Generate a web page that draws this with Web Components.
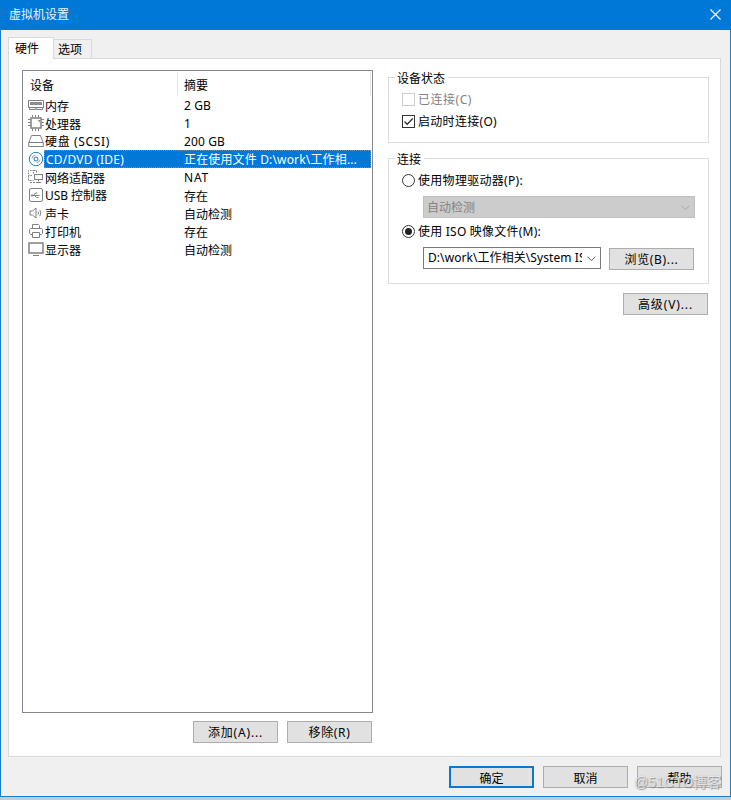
<!DOCTYPE html>
<html lang="zh-CN">
<head>
<meta charset="utf-8">
<title>虚拟机设置</title>
<style>
html,body{margin:0;width:731px;height:800px;overflow:hidden;background:#c4cbd2}
body{font:12px/18px "Noto Sans","Noto Sans CJK SC",sans-serif;color:#000}
</style>
</head>
<body>
<vm-settings></vm-settings>
<script>
const define = (name, html, extra = {}) => {
  const t = document.createElement('template');
  t.innerHTML = html;
  customElements.define(name, class extends HTMLElement {
    constructor() {
      super();
      this.attachShadow({mode: 'open'}).appendChild(t.content.cloneNode(true));
    }
    connectedCallback() { if (extra.connect) extra.connect(this, this.shadowRoot); }
  });
};

// Text run whose tracking is set so that it spans the width in "w".
define('ui-text', `<style>:host{display:inline-block;white-space:pre;line-height:18px;height:18px}:host([cjk]){line-height:20px}</style><span><slot></slot></span>`, {
  connect(host, root) {
    const w = +host.getAttribute('w');
    if (!w) return;
    const s = root.querySelector('span');
    const n = host.textContent.length;
    s.style.letterSpacing = ((w - s.getBoundingClientRect().width) / n) + 'px';
  }
});

define('ui-button', `<style>
:host{box-sizing:border-box;display:flex;align-items:center;justify-content:center;width:85px;height:22px;border:1px solid #adadad;background:#e1e1e1;padding-top:2px;flex:none}
:host([primary]){border:2px solid #1076ca}
</style><slot></slot>`);

define('ui-group', `<style>
:host{box-sizing:border-box;display:block;border:1px solid #dcdcdc;width:321px;padding:0 0 0 13px}
.cap{display:block;width:max-content;background:#fff;padding:0 3px 0 2px;margin:-9px 0 0 -7px;height:18px;line-height:20px}
</style><span class="cap"><slot name="caption"></slot></span><slot></slot>`);

define('ui-check', `<style>
:host{display:flex;align-items:center;gap:3px;height:22px}
:host([disabled]){color:#838383}
svg{display:block;flex:none;margin-bottom:2px}
.b{stroke:#333;fill:#fff}.m{stroke:#333;fill:none;stroke-width:1.3;display:none}
:host([disabled]) .b{stroke:#ccc}
:host([checked]) .m{display:inline}
ui-text{display:block}
</style><svg width="13" height="13"><rect class="b" x=".5" y=".5" width="12" height="12"/><path class="m" d="M2.5 6.5L5.2 9.3L10.8 3.5"/></svg><slot></slot>`);

define('ui-radio', `<style>
:host{display:flex;align-items:center;gap:3px;height:22px}
svg{display:block;flex:none;margin-bottom:2px}.m{display:none}
:host([checked]) .m{display:inline}
</style><svg width="13" height="13"><circle cx="6.5" cy="6.5" r="6" fill="#fff" stroke="#333"/><circle class="m" cx="6.5" cy="6.5" r="3.5" fill="#222"/></svg><slot></slot>`);

define('ui-combo', `<style>
:host{box-sizing:border-box;display:flex;align-items:center;height:22px;border:1px solid #7a7a7a;background:#fff;padding-left:4px}
:host([disabled]){background:#ccc;border-color:#bfbfbf;color:#838383;padding-left:3px}
.v{flex:1;overflow:hidden;height:18px;white-space:nowrap}
:host([disabled]) .v{line-height:20px}
svg{flex:none;margin:1px 4px 0 5px}path{fill:none;stroke:#555}
:host([disabled]) path{stroke:#a5a5a5}
</style><span class="v"><slot></slot></span><svg width="9" height="6"><path d="M.5 .7L4.5 4.7L8.5 .7"/></svg>`);

const icons = {
  memory: '<path d="M.5 3.5h15v7h-1v2h-6v-1h-1v1h-6v-2h-1zM.5 10.5h15"/><path d="M2.5 5.5h3v2h-3zM6.5 5.5h3v2h-3zM10.5 5.5h3v2h-3z" fill="#999"/>',
  cpu: '<rect x="3" y="3" width="10" height="10" stroke-width="1.5"/><path d="M4.5 0v2.5M7.5 0v2.5M10.5 0v2.5M4.5 13.5V16M7.5 13.5V16M10.5 13.5V16M0 4.5h2.5M0 7.5h2.5M0 10.5h2.5M13.5 4.5H16M13.5 7.5H16M13.5 10.5H16"/><path d="M10 5.5h1.5V7"/>',
  disk: '<path d="M3.5 2.5h9L15.3 10v3.5H.7V10zM.7 9.5h14.6"/>',
  cd: '<g stroke="#1f7fb5"><circle cx="8" cy="8" r="6.7"/><circle cx="8" cy="8" r="2"/><path d="M4 7.5A4 4 0 0 1 7 4.2M9 11.8A4 4 0 0 0 12 8.8" stroke="#69a9d0"/></g>',
  net: '<path d="M5.5 4.5V1.5h-5v5h4" stroke-dasharray="1.5 1"/><path d="M5.5 1.5h3v3M.5 6.5v5h5M2 13.5h6" stroke-dasharray="2 1"/><rect x="6.5" y="5.5" width="8" height="5"/><path d="M10.5 10.5v2M8 13.5h5"/>',
  usb: '<rect x="1.5" y="1.5" width="13" height="13" rx="1.5"/><path d="M3.5 8.5h8M5.5 8.5L7.5 6h2M6.5 8.5l2 2h2"/><circle cx="4" cy="8.5" r=".7" fill="#777"/>',
  sound: '<path d="M2 6h2.5L8 3v10L4.5 10H2zM10 6.5q1 1.5 0 3M11.8 4.8q2 3.2 0 6.4"/>',
  printer: '<path d="M4.5 5.5v-4h6l1 1v3M4.5 11.5h-2l-1-1v-4l1-1h11l1 1v4l-1 1h-2M4.5 9.5h7v5h-7z"/>',
  display: '<rect x="1" y="2" width="14" height="10" stroke-width="1.5"/><path d="M5 14.5h6"/>'
};
define('device-row', `<style>
:host{display:grid;grid-template-columns:21px 134px 1fr;height:18px;padding-right:1px}
svg{display:block;margin:1px 0 0 5px;fill:none;stroke:#808080}
.n{padding-left:1px;height:18px;margin-top:1px}.s{padding-left:6px;height:18px;margin-top:1px;overflow:hidden}
.n,.s{line-height:18px;box-sizing:border-box}
:host([selected]) .n,:host([selected]) .s{background:#0078d7;color:#fff;margin:0;border:1px dotted #5f93b8}
:host([selected]) .n{border-right:0;padding:0 0 0 1px}
:host([selected]) .s{border-left:0}
</style><svg width="16" height="16" viewBox="0 0 16 16"></svg><div class="n"><slot name="name"></slot></div><div class="s"><slot></slot></div>`, {
  connect(host, root) { root.querySelector('svg').innerHTML = icons[host.getAttribute('icon')]; }
});

define('device-list', `<style>
:host{box-sizing:border-box;display:block;width:351px;height:643px;border:1px solid #828790;background:#fff}
.h{display:grid;grid-template-columns:154px 1fr;height:24px;margin:1px 1px 0 0}
.h div{border-right:1px solid #e5e5e5;padding:5px 0 0 7px;box-sizing:border-box}
.h div+div{padding-left:7px}
.h div:first-child{width:155px}
</style><div class="h"><div>设备</div><div>摘要</div></div>
<device-row icon="memory"><ui-text slot="name" cjk>内存</ui-text><ui-text w="27">2 GB</ui-text></device-row>
<device-row icon="cpu"><ui-text slot="name" cjk>处理器</ui-text><ui-text>1</ui-text></device-row>
<device-row icon="disk"><ui-text slot="name" w="65">硬盘 (SCSI)</ui-text><ui-text w="41">200 GB</ui-text></device-row>
<device-row icon="cd" selected><ui-text slot="name" w="78">CD/DVD (IDE)</ui-text><ui-text w="173">正在使用文件 D:\\work\\工作相...</ui-text></device-row>
<device-row icon="net"><ui-text slot="name" cjk>网络适配器</ui-text><ui-text w="25">NAT</ui-text></device-row>
<device-row icon="usb"><ui-text slot="name" w="62">USB 控制器</ui-text><ui-text cjk>存在</ui-text></device-row>
<device-row icon="sound"><ui-text slot="name" cjk>声卡</ui-text><ui-text cjk>自动检测</ui-text></device-row>
<device-row icon="printer"><ui-text slot="name" cjk>打印机</ui-text><ui-text cjk>存在</ui-text></device-row>
<device-row icon="display"><ui-text slot="name" cjk>显示器</ui-text><ui-text cjk>自动检测</ui-text></device-row>`);

define('title-bar', `<style>
:host{box-sizing:border-box;display:flex;justify-content:space-between;align-items:center;height:30px;background:#0078d7;color:#eaf4fc;padding:0 10px 0 9px}
svg{margin-top:-1px}
</style><slot></slot><svg width="11" height="11"><path d="M.5 .5l10 10M10.5 .5l-10 10" stroke="#fff" stroke-width="1.2"/></svg>`);

define('tab-strip', `<style>
:host{display:flex;align-items:flex-end;height:22px;margin-left:8px}
div{box-sizing:border-box;border:1px solid #d9d9d9;border-bottom:0}
.a{width:46px;height:22px;background:#fff;padding:2px 0 0 6px;position:relative;z-index:1}
.b{width:38px;height:19px;background:#f0f0f0;border-left:0;padding:1px 0 0 4px;margin-bottom:1px}
</style><div class="a">硬件</div><div class="b">选项</div>`);

define('vm-settings', `<style>
:host{box-sizing:border-box;display:block;width:731px;height:797px;background:#f0f0f0;border:solid #1a7dcb;border-width:0 1px 1px;position:relative}
title-bar{margin:0 -1px}
tab-strip{margin:7px 0 0 7px}
.panel{box-sizing:border-box;width:713px;height:699px;margin:-1px 0 0 7px;border:1px solid #d9d9d9;background:#fff;padding:11px 0 0 13px;display:flex;gap:15px}
.acts{display:flex;justify-content:flex-end;gap:9px;margin:8px 1px 0 0}
.right{padding-top:7px}
.g1{height:66px}.g2{height:126px;margin-top:15px}
.pick{display:flex;gap:8px;margin:4px 0 0 21px}
.pick ui-combo{width:178px}.pick ui-button{margin-top:1px}
.adv{margin:9px 0 0 235px}
.foot{display:flex;gap:9px;justify-content:flex-end;margin:9px 8px 0 0}
.mark{position:absolute;left:633px;top:772px;font:14px/21px "Liberation Sans","Noto Sans CJK SC",sans-serif;color:rgba(255,255,255,.72);text-shadow:1px 1px 1px rgba(100,100,100,.6),0 0 1px rgba(120,120,120,.5)}
</style>
<title-bar>虚拟机设置</title-bar>
<tab-strip></tab-strip>
<div class="panel">
 <div><device-list></device-list><div class="acts"><ui-button><ui-text w="55">添加(A)...</ui-text></ui-button><ui-button><ui-text w="42">移除(R)</ui-text></ui-button></div></div>
 <div class="right">
  <ui-group class="g1"><span slot="caption">设备状态</span>
   <ui-check disabled style="margin-top:2px"><ui-text w="54">已连接(C)</ui-text></ui-check>
   <ui-check checked><ui-text w="79">启动时连接(O)</ui-text></ui-check></ui-group>
  <ui-group class="g2"><span slot="caption">连接</span>
   <ui-radio style="margin-top:2px"><ui-text w="105">使用物理驱动器(P):</ui-text></ui-radio>
   <ui-combo disabled style="margin:4px 0 0 21px;width:272px">自动检测</ui-combo>
   <ui-radio checked style="margin-top:3px"><ui-text w="123">使用 ISO 映像文件(M):</ui-text></ui-radio>
   <div class="pick"><ui-combo><ui-text w="167">D:\\work\\工作相关\\System ISO</ui-text></ui-combo><ui-button><ui-text w="54">浏览(B)...</ui-text></ui-button></div>
  </ui-group>
  <ui-button class="adv"><ui-text w="55">高级(V)...</ui-text></ui-button>
 </div>
</div>
<div class="foot"><ui-button primary><ui-text cjk>确定</ui-text></ui-button><ui-button><ui-text cjk>取消</ui-text></ui-button><ui-button><ui-text cjk>帮助</ui-text></ui-button></div>
<div class="mark">@51CTO博客</div>`);
</script>
</body>
</html>
